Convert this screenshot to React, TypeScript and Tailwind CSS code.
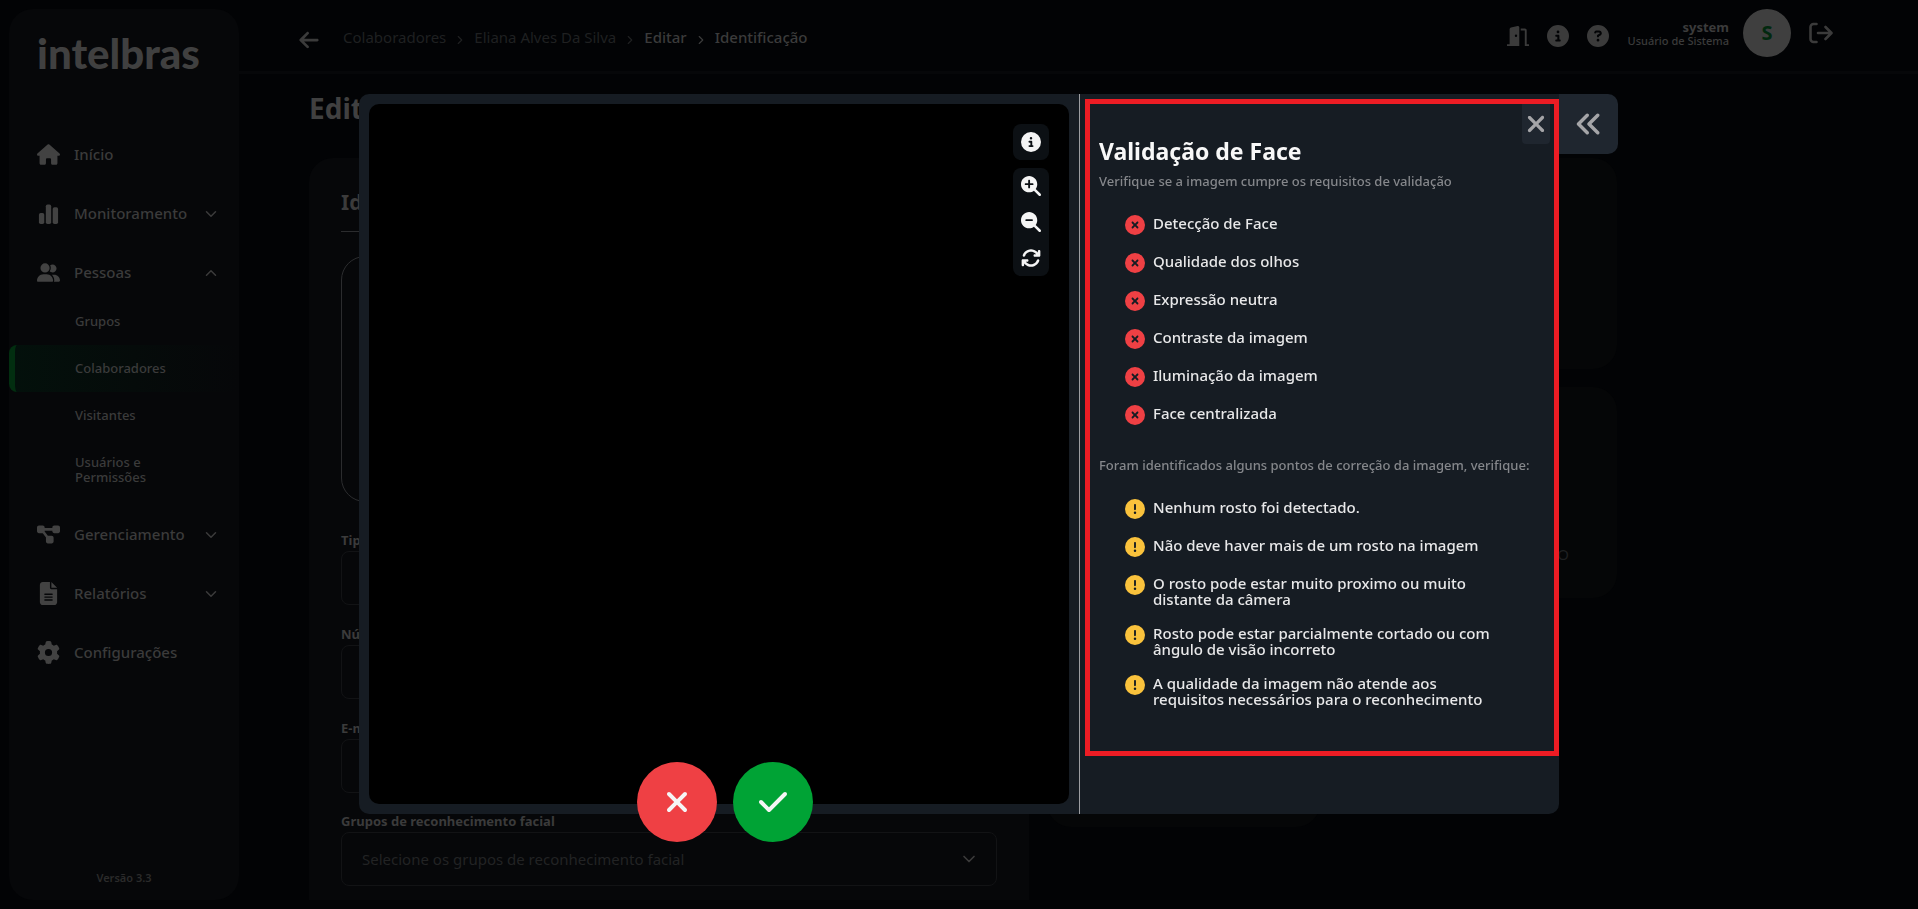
import React from 'react';
import { ChevronDown, ChevronRight, ChevronUp } from 'lucide-react';
import {
  FaAnglesLeft,
  FaArrowLeft,
  FaArrowsRotate,
  FaCheck,
  FaCircleExclamation,
  FaCircleInfo,
  FaCircleQuestion,
  FaCircleXmark,
  FaDiagramProject,
  FaFileLines,
  FaGear,
  FaHouse,
  FaMagnifyingGlassMinus,
  FaMagnifyingGlassPlus,
  FaUserGroup,
  FaXmark,
} from 'react-icons/fa6';

const BarsIcon = () => (
  <svg viewBox="0 0 24 24" className="w-6 h-6" fill="currentColor">
    <rect x="2" y="11" width="5.6" height="11.5" rx="1.8" />
    <rect x="9.2" y="2" width="5.6" height="20.5" rx="1.8" />
    <rect x="16.4" y="5" width="5.6" height="17.5" rx="1.8" />
  </svg>
);

const DoorIcon = () => (
  <svg viewBox="0 0 22 20" className="w-[22px] h-5" fill="currentColor">
    <path
      fillRule="evenodd"
      d="M0 18.2h2.6V3.2c0-.9.6-1.6 1.4-1.8L10.600 0c.9-.2 1.700.5 1.700 1.400V20H0zM9 8.600a1.200 1.200 0 1 0 0 2.400 1.200 1.200 0 0 0 0-2.400z"
    />
    <path d="M13.700 2.600h4.200c1 0 1.800.8 1.800 1.800v13.800H22V20h-4.200V4.500h-4.100z" />
  </svg>
);

const LogoutIcon = () => (
  <svg viewBox="0 0 24 22" className="w-6" fill="none" stroke="currentColor" strokeWidth="2.6" strokeLinecap="round" strokeLinejoin="round">
    <path d="M7.5 2H4.5a3 3 0 0 0-3 3v12a3 3 0 0 0 3 3h3" />
    <path d="M9 11h13M16.5 5l6 6-6 6" />
  </svg>
);

const navItems = [
  { label: 'Início', icon: <FaHouse /> },
  { label: 'Monitoramento', icon: <BarsIcon />, arrow: 'down' },
  {
    label: 'Pessoas',
    icon: <FaUserGroup />,
    arrow: 'up',
    children: ['Grupos', 'Colaboradores', 'Visitantes', 'Usuários e Permissões'],
  },
  { label: 'Gerenciamento', icon: <FaDiagramProject />, arrow: 'down' },
  { label: 'Relatórios', icon: <FaFileLines />, arrow: 'down' },
  { label: 'Configurações', icon: <FaGear /> },
];

const requirements = [
  'Detecção de Face',
  'Qualidade dos olhos',
  'Expressão neutra',
  'Contraste da imagem',
  'Iluminação da imagem',
  'Face centralizada',
];

const warnings = [
  'Nenhum rosto foi detectado.',
  'Não deve haver mais de um rosto na imagem',
  'O rosto pode estar muito proximo ou muito distante da câmera',
  'Rosto pode estar parcialmente cortado ou com ângulo de visão incorreto',
  'A qualidade da imagem não atende aos requisitos necessários para o reconhecimento',
];

function Sidebar() {
  return (
    <aside className="w-[230px] shrink-0 rounded-3xl bg-[#060709] flex flex-col">
      <div className="h-[116px] pl-7 pt-[18px] font-[Lato,sans-serif] font-black text-[42px] leading-[52px] text-[#404040]">
        intelbras
      </div>
      <nav className="flex-1 font-medium">
        {navItems.map((item) => (
          <div key={item.label}>
            <a href="#" className="h-[59px] pl-7 pr-[19px] flex items-center text-[15px]">
              <span className="w-[23px] mr-3.5 flex justify-center text-[23px] text-[#424242]">{item.icon}</span>
              <span className="flex-1">{item.label}</span>
              {item.arrow === 'down' && <ChevronDown className="w-[18px] h-[18px]" />}
              {item.arrow === 'up' && <ChevronUp className="w-[18px] h-[18px]" />}
            </a>
            {item.children && (
              <div className="-mt-1 pb-1 text-[13px] leading-[15px]">
                {item.children.map((child) => (
                  <a
                    key={child}
                    href="#"
                    className={`block py-4 pr-16 ${
                      child === 'Colaboradores'
                        ? 'pl-[60px] rounded-l-lg border-l-6 border-[#022e10] bg-linear-to-r from-[#03100b] to-[#060709]'
                        : 'pl-[66px]'
                    }`}
                  >
                    {child}
                  </a>
                ))}
              </div>
            )}
          </div>
        ))}
      </nav>
      <p className="pb-3.5 text-center text-[11px] leading-4 font-semibold text-[#2b2b2b]">Versão 3.3</p>
    </aside>
  );
}

function Header() {
  return (
    <header className="h-[62px] shrink-0 box-content border-b-3 border-[#060709] flex items-start pl-[59px] pr-[85px]">
      <button aria-label="Voltar" className="mt-5 mr-[23px] text-[22px]">
        <FaArrowLeft />
      </button>
      <nav className="mt-[17px] flex flex-1 items-center gap-1.5 text-[15px] leading-[22px] text-[#1f2021]">
        <a href="#">Colaboradores</a>
        <ChevronRight className="w-4 h-3.5 mt-1.5" />
        <a href="#">Eliana Alves Da Silva</a>
        <ChevronRight className="w-4 h-3.5 mt-1.5" />
        <a href="#" className="font-medium text-[#3b3b3b]">Editar</a>
        <ChevronRight className="w-4 h-3.5 mt-1.5 text-[#3b3b3b]" />
        <span className="font-medium text-[#3b3b3b]">Identificação</span>
      </nav>
      <div className="flex items-center">
        <div className="flex items-center gap-[18px] mt-1.5 text-[22px]">
          <button aria-label="Portas"><DoorIcon /></button>
          <button aria-label="Informações"><FaCircleInfo /></button>
          <button aria-label="Ajuda"><FaCircleQuestion /></button>
        </div>
        <div className="ml-[19px] mt-0.5 text-right leading-[13px]">
          <p className="text-[13px] font-bold">system</p>
          <p className="text-[11px] font-medium">Usuário de Sistema</p>
        </div>
        <div className="ml-3.5 w-12 h-12 rounded-full bg-[#3f3f3f] flex items-center justify-center text-xl font-bold text-[#02290f]">
          S
        </div>
        <button aria-label="Sair" className="ml-[18px]"><LogoutIcon /></button>
      </div>
    </header>
  );
}

function Field({ id, label }: { id: string; label: string }) {
  return (
    <div>
      <label htmlFor={id} className="block pb-0.5 text-[13px] leading-[18px] font-bold">{label}</label>
      <input id={id} className="block h-[54px] w-full rounded-lg border border-[#121315] px-5" />
    </div>
  );
}

function EditForm() {
  return (
    <div className="flex-1 min-h-0 overflow-hidden pl-[70px]">
      <h1 className="mt-4 mb-8 text-[28px] leading-9 font-bold text-[#404040]">Editar</h1>
      <div className="grid max-w-[1308px] grid-cols-[720fr_570fr] gap-[18px]">
        <section className="min-w-0 rounded-3xl bg-[#060709] px-8 pt-7 pb-10">
          <h2 className="border-b border-[#2b2c2e] pt-0.5 pb-[15px] text-[21px] leading-7 font-bold">Identificação</h2>
          <div className="mt-6 mb-[29px] h-[246px] w-[246px] rounded-3xl border border-[#2b2c2e]" />
          <div className="mb-[19px] flex flex-col gap-5">
            <Field id="tipo" label="Tipo" />
            <Field id="numero" label="Número" />
            <Field id="email" label="E-mail" />
          </div>
          <label htmlFor="grupos" className="block pb-0.5 text-[13px] leading-[18px] font-bold">
            Grupos de reconhecimento facial
          </label>
          <div className="relative">
            <select
              id="grupos"
              className="block h-[54px] w-full appearance-none rounded-lg border border-[#121315] bg-[#060709] px-5 text-[15px] text-[#222324]"
            >
              <option>Selecione os grupos de reconhecimento facial</option>
            </select>
            <ChevronDown className="pointer-events-none absolute right-[18px] top-[17px] h-5 w-5" />
          </div>
        </section>
        <div className="flex min-w-0 flex-col gap-[18px]">
          <section className="h-[211px] rounded-3xl bg-[#050607]" />
          <section className="h-[211px] rounded-3xl bg-[#050607] pt-[156px] pr-12 text-right text-[15px] leading-[22px] text-[#1f2021]">
            O
          </section>
          <section className="h-[211px] w-[273px] rounded-3xl bg-[#050607]" />
        </div>
      </div>
    </div>
  );
}

function ImageTools() {
  return (
    <div className="absolute top-[30px] right-[30px] flex flex-col gap-2 text-xl text-[#f5f5f5]">
      <button aria-label="Informações da imagem" className="flex h-9 w-9 items-center justify-center rounded-lg bg-[#0c1014]">
        <FaCircleInfo />
      </button>
      <div className="flex flex-col rounded-lg bg-[#0c1014]">
        <button aria-label="Aumentar" className="flex h-9 w-9 items-center justify-center"><FaMagnifyingGlassPlus /></button>
        <button aria-label="Diminuir" className="flex h-9 w-9 items-center justify-center"><FaMagnifyingGlassMinus /></button>
        <button aria-label="Reiniciar" className="flex h-9 w-9 items-center justify-center"><FaArrowsRotate /></button>
      </div>
    </div>
  );
}

function FaceValidationModal() {
  return (
    <div className="fixed inset-0 flex items-center justify-center pb-px">
      <div role="dialog" aria-labelledby="face-title" className="relative flex w-[1200px] rounded-[10px] rounded-tr-none bg-[#161c23]">
        <div className="relative w-[720px] shrink-0 p-2.5">
          <div className="aspect-square rounded-[10px] bg-black" />
          <ImageTools />
          <div className="absolute -bottom-7 left-[278px] flex gap-4 text-[#f5f5f5]">
            <button aria-label="Cancelar" className="flex h-20 w-20 items-center justify-center rounded-full bg-[#ef4044] text-[32px]">
              <FaXmark />
            </button>
            <button aria-label="Confirmar" className="flex h-20 w-20 items-center justify-center rounded-full bg-[#00a335] text-[32px]">
              <FaCheck />
            </button>
          </div>
        </div>

        <div className="flex-1 border-l border-[#9c9da1] pt-[5px] pl-[5px]">
          <div className="relative border-5 border-[#ed1c24] pl-[9px] pr-[9px] pt-[33px] pb-11">
            <button aria-label="Fechar" className="absolute top-0 right-1 flex h-10 w-7 items-center justify-center rounded-b bg-[#1f262f] text-[26px] text-[#a5a5a8]">
              <FaXmark className="shrink-0" />
            </button>
            <h2 id="face-title" className="text-[23px] leading-7 font-bold text-[#f8f8f8]">Validação de Face</h2>
            <p className="mt-1.5 text-[13px] leading-5 font-medium text-[#85878b]">
              Verifique se a imagem cumpre os requisitos de validação
            </p>
            <ul className="mt-6 flex flex-col gap-[18px] pl-[26px] pr-10 text-[15px] leading-4 font-medium text-[#e8e8e9]">
              {requirements.map((text) => (
                <li key={text} className="flex min-h-5 gap-2">
                  <FaCircleXmark className="h-5 w-5 shrink-0 text-[#ef4044]" />
                  <span>{text}</span>
                </li>
              ))}
            </ul>
            <p className="mt-[30px] text-[13px] leading-5 font-medium text-[#85878b] whitespace-nowrap">
              Foram identificados alguns pontos de correção da imagem, verifique:
            </p>
            <ul className="mt-6 flex flex-col gap-[18px] pl-[26px] pr-10 text-[15px] leading-4 font-medium text-[#e8e8e9]">
              {warnings.map((text) => (
                <li key={text} className="flex min-h-5 gap-2">
                  <FaCircleExclamation className="h-5 w-5 shrink-0 text-[#fac23c]" />
                  <span>{text}</span>
                </li>
              ))}
            </ul>
          </div>
        </div>

        <button aria-label="Recolher" className="absolute top-0 left-full flex h-[60px] w-[59px] items-center justify-center rounded-r-[10px] bg-[#1f262f] text-[28px] text-[#a5a5a8]">
          <FaAnglesLeft />
        </button>
      </div>
    </div>
  );
}

export default function App() {
  return (
    <div className="h-screen overflow-hidden bg-[#020305] font-['Noto_Sans',sans-serif] text-[#3b3b3b]">
      <div className="flex h-full py-[9px] pl-[9px]">
        <Sidebar />
        <main className="flex min-w-0 flex-1 flex-col">
          <Header />
          <EditForm />
        </main>
      </div>
      <FaceValidationModal />
    </div>
  );
}
